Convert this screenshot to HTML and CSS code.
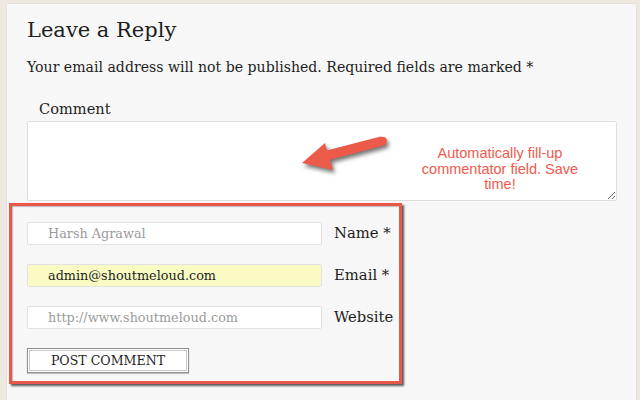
FILE: index.html
```html
<!DOCTYPE html>
<html>
<head>
<meta charset="utf-8">
<link rel="stylesheet" href="styles.css">
</head>
<body>
<div class="panel">
  <h2 class="title">Leave a Reply</h2>
  <p class="notes">Your email address will not be published. Required fields are marked *</p>
  <label class="comment-label">Comment</label>
  <div class="comment-wrap">
    <textarea class="comment-box"></textarea>
    <svg class="arrow" width="110" height="50" viewBox="0 0 110 50">
      <g fill="#ec5a4a">
        <path d="M84 6.5 L88 13 L32 28 L28 21 Z" stroke="#ec5a4a" stroke-width="2" stroke-linejoin="round"/>
        <circle cx="86" cy="9.8" r="3.8"/>
        <path d="M5 32 L28 12 L36 39 Z"/>
      </g>
    </svg>
    <div class="note">Automatically fill-up commentator field. Save time!</div>
  </div>
  <div class="fields">
    <div class="row">
      <input class="field" type="text" placeholder="Harsh Agrawal">
      <span class="lbl">Name *</span>
    </div>
    <div class="row">
      <input class="field filled" type="text" value="admin@shoutmeloud.com">
      <span class="lbl">Email *</span>
    </div>
    <div class="row">
      <input class="field" type="text" placeholder="http://www.shoutmeloud.com">
      <span class="lbl">Website</span>
    </div>
    <button class="submit">POST COMMENT</button>
  </div>
</div>
</body>
</html>
```

FILE: styles.css
```css
html, body {
  margin: 0;
  padding: 0;
  height: 100%;
}
body {
  background: #efe8df;
  font-family: "DejaVu Serif", Georgia, serif;
  color: #1e1e1e;
  overflow: hidden;
}
.panel {
  margin: 3px 3px 0 6px;
  height: 400px;
  box-sizing: border-box;
  background: #f7f7f7;
  border: 1px solid #e4e2de;
  padding: 11px 20px 0 20px;
  display: flex;
  flex-direction: column;
  align-items: flex-start;
}
.title {
  margin: 0;
  font-weight: normal;
  font-size: 21px;
  line-height: 30px;
}
.notes {
  margin: 12px 0 0 0;
  font-size: 14.1px;
  line-height: 20px;
}
.comment-label {
  margin: 22px 0 0 12px;
  font-size: 14.6px;
  line-height: 20px;
}
.comment-wrap {
  position: relative;
  margin-top: 2px;
  width: 590px;
  height: 80px;
}
.comment-box {
  display: block;
  width: 100%;
  height: 100%;
  box-sizing: border-box;
  margin: 0;
  background: #fff;
  border: 1px solid #dedede;
  border-radius: 2px;
  resize: both;
}
.arrow {
  position: absolute;
  left: 270px;
  top: 10px;
  filter: drop-shadow(2px 3px 2px rgba(0, 0, 0, 0.55));
}
.note {
  position: absolute;
  left: 383px;
  top: 25px;
  width: 180px;
  text-align: center;
  font-family: "Liberation Sans", Arial, sans-serif;
  font-size: 14.5px;
  line-height: 15.5px;
  color: #f15a4b;
}
.fields {
  margin: 2px 0 0 -18px;
  width: 393px;
  box-sizing: border-box;
  border: 3px solid #e8574a;
  box-shadow: 2px 2px 2px rgba(60, 60, 60, 0.85), inset 1px 1px 1px rgba(80, 80, 80, 0.35);
  padding: 16px 0 8px 15px;
  display: flex;
  flex-direction: column;
  gap: 19px;
  align-items: flex-start;
}
.row {
  display: flex;
  align-items: center;
  gap: 12px;
}
.field {
  width: 295px;
  height: 23px;
  box-sizing: border-box;
  margin: 0;
  padding: 0 0 0 20px;
  background: #fff;
  border: 1px solid #e2e2e2;
  border-radius: 2px;
  font-family: "DejaVu Serif", Georgia, serif;
  font-size: 12.8px;
  color: #1e1e1e;
}
.field::placeholder {
  color: #9b9b9b;
}
.field.filled {
  background: #f9fbc3;
}
.lbl {
  font-size: 14.8px;
  line-height: 20px;
  margin-top: -2px;
}
.submit {
  width: 162px;
  height: 25px;
  margin: 0;
  padding: 0;
  background: #fff;
  border: 1px solid #8e8e8e;
  box-shadow: inset 0 0 0 1px #fff, inset 0 0 0 2px #c9c9c9, 0 1px 1px rgba(0,0,0,0.2);
  font-family: "DejaVu Serif", Georgia, serif;
  font-size: 12.6px;
  color: #1e1e1e;
}
```
